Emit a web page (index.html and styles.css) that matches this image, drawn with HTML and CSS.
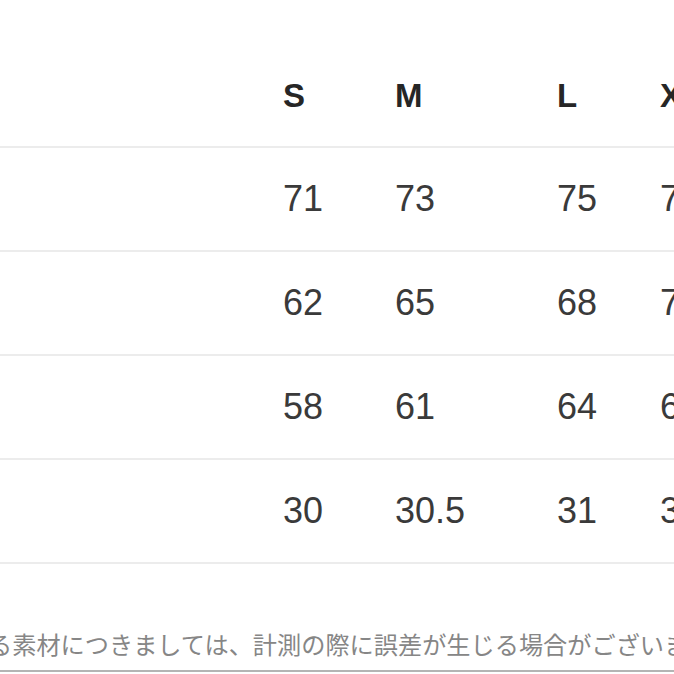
FILE: index.html
```html
<!DOCTYPE html>
<html lang="ja">
<head>
<meta charset="utf-8">
<link rel="stylesheet" href="styles.css">
</head>
<body>
<div class="page">
  <div class="chart">
    <div class="row head">
      <div class="label"></div>
      <div class="cell">S</div>
      <div class="cell">M</div>
      <div class="cell">L</div>
      <div class="cell">XL</div>
    </div>
    <div class="row">
      <div class="label"></div>
      <div class="cell">71</div>
      <div class="cell">73</div>
      <div class="cell">75</div>
      <div class="cell">77</div>
    </div>
    <div class="row">
      <div class="label"></div>
      <div class="cell">62</div>
      <div class="cell">65</div>
      <div class="cell">68</div>
      <div class="cell">71</div>
    </div>
    <div class="row">
      <div class="label"></div>
      <div class="cell">58</div>
      <div class="cell">61</div>
      <div class="cell">64</div>
      <div class="cell">67</div>
    </div>
    <div class="row">
      <div class="label"></div>
      <div class="cell">30</div>
      <div class="cell">30.5</div>
      <div class="cell">31</div>
      <div class="cell">31.5</div>
    </div>
  </div>
  <div class="note">
    <p class="note-text">る素材につきましては、計測の際に誤差が生じる場合がございます。</p>
  </div>
</div>
</body>
</html>
```
FILE: styles.css
```css
html, body {
  margin: 0;
  padding: 0;
  background: #ffffff;
  overflow: hidden;
}
.page {
  width: 674px;
  height: 674px;
  overflow: hidden;
  font-family: "Liberation Sans", Arial, sans-serif;
  padding-top: 44px;
  box-sizing: border-box;
}
.chart {
  display: flex;
  flex-direction: column;
}
.row {
  display: grid;
  grid-template-columns: 283px 112px 162px 103px 120px;
  height: 102px;
  align-items: center;
  border-bottom: 2px solid #ececec;
  font-size: 36px;
  color: #3a3a3a;
  white-space: nowrap;
}
.row.head {
  font-size: 33px;
  font-weight: bold;
  color: #262626;
}
.cell {
  line-height: 1;
}
.note {
  height: 108px;
  border-bottom: 2px solid #b4b4b4;
  display: flex;
  align-items: flex-end;
  padding-bottom: 12px;
  box-sizing: border-box;
}
.note-text {
  margin: 0 0 0 -12px;
  font-family: "Noto Sans CJK JP", "Noto Sans", sans-serif;
  font-size: 24.2px;
  line-height: 28px;
  color: #868686;
  white-space: nowrap;
}
```
